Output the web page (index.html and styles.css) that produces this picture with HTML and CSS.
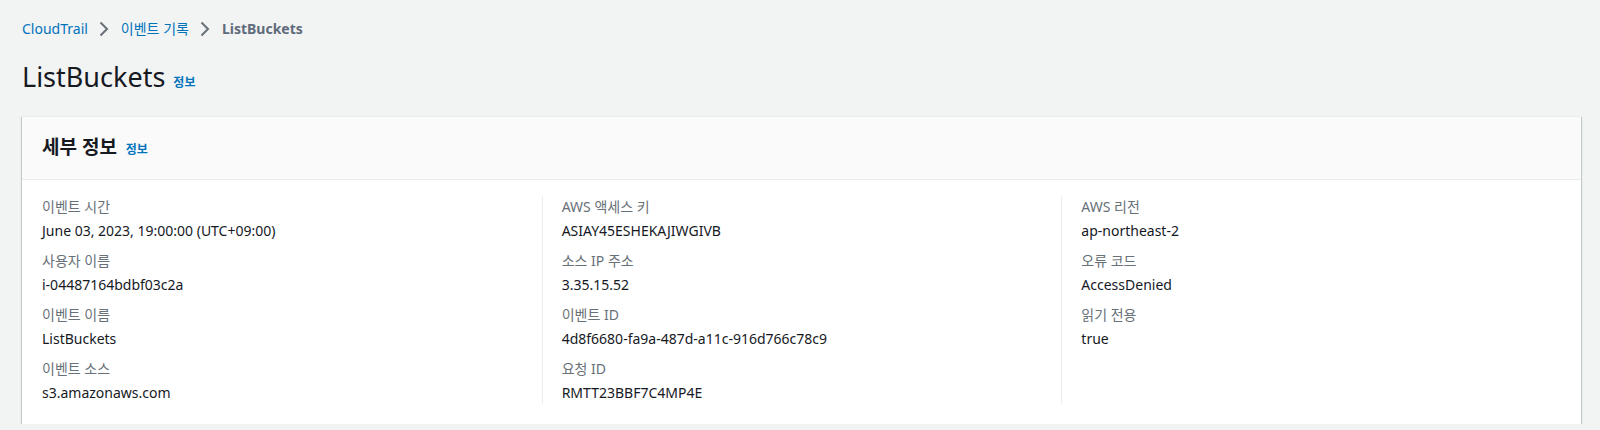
FILE: index.html
```html
<!DOCTYPE html>
<html lang="ko">
<head>
<meta charset="utf-8">
<link rel="stylesheet" href="styles.css">
</head>
<body>
<div class="page">
  <nav class="crumbs">
    <a class="crumb-link">CloudTrail</a>
    <svg class="chev" viewBox="0 0 10 16" width="10" height="16"><path d="M1.5 1.5 L8 8 L1.5 14.5" fill="none" stroke="#687078" stroke-width="2"/></svg>
    <a class="crumb-link">이벤트 기록</a>
    <svg class="chev" viewBox="0 0 10 16" width="10" height="16"><path d="M1.5 1.5 L8 8 L1.5 14.5" fill="none" stroke="#687078" stroke-width="2"/></svg>
    <span class="crumb-current">ListBuckets</span>
  </nav>
  <h1 class="page-title">ListBuckets <a class="info">정보</a></h1>
  <section class="card">
    <header class="card-head">
      <h2 class="card-title">세부 정보 <a class="info">정보</a></h2>
    </header>
    <div class="card-body">
      <div class="col">
        <div class="kv"><div class="k">이벤트 시간</div><div class="v">June 03, 2023, 19:00:00 (UTC+09:00)</div></div>
        <div class="kv"><div class="k">사용자 이름</div><div class="v">i-04487164bdbf03c2a</div></div>
        <div class="kv"><div class="k">이벤트 이름</div><div class="v">ListBuckets</div></div>
        <div class="kv"><div class="k">이벤트 소스</div><div class="v">s3.amazonaws.com</div></div>
      </div>
      <div class="col">
        <div class="kv"><div class="k">AWS 액세스 키</div><div class="v">ASIAY45ESHEKAJIWGIVB</div></div>
        <div class="kv"><div class="k">소스 IP 주소</div><div class="v">3.35.15.52</div></div>
        <div class="kv"><div class="k">이벤트 ID</div><div class="v">4d8f6680-fa9a-487d-a11c-916d766c78c9</div></div>
        <div class="kv"><div class="k">요청 ID</div><div class="v">RMTT23BBF7C4MP4E</div></div>
      </div>
      <div class="col">
        <div class="kv"><div class="k">AWS 리전</div><div class="v">ap-northeast-2</div></div>
        <div class="kv"><div class="k">오류 코드</div><div class="v">AccessDenied</div></div>
        <div class="kv"><div class="k">읽기 전용</div><div class="v">true</div></div>
      </div>
    </div>
  </section>
</div>
</body>
</html>
```
FILE: styles.css
```css
html, body {
  margin: 0;
  padding: 0;
  background: #f2f3f3;
}
body {
  font-family: "Noto Sans", "Noto Sans CJK KR", sans-serif;
  font-size: 14px;
  color: #16191f;
}
.page {
  padding: 18px 19px 0 22px;
}
.crumbs {
  display: flex;
  align-items: center;
  height: 22px;
  line-height: 22px;
}
.crumb-link {
  color: #0073bb;
  font-size: 14px;
}
.chev {
  margin: 0 12px 0 11px;
}
.crumb-current {
  color: #5f6b7a;
  font-weight: 700;
}
.page-title {
  margin: 19px 0 0;
  height: 36px;
  font-size: 27px;
  line-height: 36px;
  font-weight: 400;
  color: #16191f;
}
.info {
  color: #0073bb;
  font-size: 12px;
  font-weight: 700;
  line-height: 1;
  margin-left: 1px;
}
.card {
  margin-top: 21px;
  background: #fff;
  border-top: 1px solid #eaeded;
  box-shadow: 0 1px 1px 0 rgba(0,28,36,.3), 1px 1px 1px 0 rgba(0,28,36,.15), -1px 1px 1px 0 rgba(0,28,36,.15);
}
.card-head {
  background: #fafafa;
  border-bottom: 1px solid #eaeded;
  padding: 19px 20px 21px;
  height: 22px;
}
.card-title {
  margin: 0;
  font-size: 19px;
  line-height: 22px;
  font-weight: 700;
}
.card-title .info {
  margin-left: 4px;
}
.card-body {
  display: grid;
  grid-template-columns: 1fr 1fr 1fr;
  padding: 16px 0 20px;
}
.col {
  padding-left: 20px;
  display: flex;
  flex-direction: column;
  gap: 8px;
}
.col + .col {
  border-left: 1px solid #eaeded;
  padding-left: 19px;
}
.k {
  color: #687078;
  line-height: 22px;
  margin-bottom: 2px;
}
.v {
  line-height: 22px;
}
```
